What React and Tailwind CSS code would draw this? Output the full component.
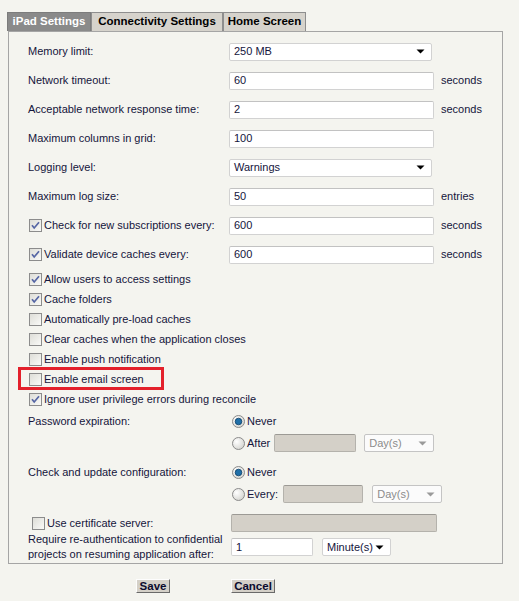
import React from 'react';

const ink = 'text-[#14143c]';

// small down triangle used by the drop-downs
const Caret = ({ muted }) => (
    <svg width="9" height="5" viewBox="0 0 9 5" className="shrink-0">
        <path d="M0.5 0.5 L8.5 0.5 L4.5 4.5 Z" fill={muted ? '#9a9a9a' : '#000'} />
    </svg>
);

const Select = ({ value, width, muted }) => (
    <div
        className={`flex h-[18px] items-center justify-between rounded-[2px] border pl-[4px] pr-[6px] ${
            muted ? 'border-[#c4c4c4] bg-[#fbfbfb] text-[#8c8c8c]' : `border-[#d2d2d2] bg-white ${ink}`
        }`}
        style={{ width }}
    >
        <span>{value}</span>
        <Caret muted={muted} />
    </div>
);

const Input = ({ value, width = 205, disabled }) => (
    <div
        className={`flex h-[18px] items-center rounded-[2px] border pl-[4px] ${
            disabled
                ? 'border-[#b4b2ac] border-t-[#9c9a95] bg-[#d4d0c8]'
                : `border-[#d2d2d2] border-t-[#c2c2c2] bg-white ${ink}`
        }`}
        style={{ width }}
    >
        {value}
    </div>
);

const Checkbox = ({ checked }) => (
    <svg width="13" height="13" viewBox="0 0 13 13" className="shrink-0">
        <defs>
            <linearGradient id="cbg" x1="0" y1="0" x2="1" y2="1">
                <stop offset="0" stopColor="#dcdcd6" />
                <stop offset="1" stopColor="#fbfbf9" />
            </linearGradient>
        </defs>
        <rect x="0.5" y="0.5" width="12" height="12" fill="url(#cbg)" stroke="#8c8c8c" />
        {checked && <path d="M3 6.2 L5.2 9 L10 3.2" fill="none" stroke="#5666a4" strokeWidth="1.7" />}
    </svg>
);

const Radio = ({ checked }) => (
    <svg width="13" height="13" viewBox="0 0 13 13" className="shrink-0">
        <defs>
            <radialGradient id="rbg" cx="0.35" cy="0.35" r="0.8">
                <stop offset="0" stopColor="#ffffff" />
                <stop offset="1" stopColor="#cfcfca" />
            </radialGradient>
        </defs>
        <circle cx="6.5" cy="6.5" r="6" fill="url(#rbg)" stroke="#8a8a8a" />
        {checked && <circle cx="6.5" cy="6.5" r="3.3" fill="#1f6fa8" stroke="#0d3f66" strokeWidth="0.8" />}
    </svg>
);

const Row = ({ label, children, unit }) => (
    <div className="flex h-[29px] items-center">
        <div className="w-[201px] shrink-0">{label}</div>
        {children}
        {unit && <span className="ml-[7px]">{unit}</span>}
    </div>
);

const CheckRow = ({ label, checked }) => (
    <div className="flex h-[20px] items-center gap-[2px] pl-[1px]">
        <Checkbox checked={checked} />
        <span>{label}</span>
    </div>
);

const Tab = ({ label, width, active }) => (
    <div
        className={`flex h-[19px] items-center justify-center border border-b-0 text-[11.5px] font-bold ${
            active ? 'border-[#7c7c7c] bg-[#8a8a8a] text-white' : 'border-[#8e8e8e] bg-[#d6d3cc] text-black'
        }`}
        style={{ width }}
    >
        {label}
    </div>
);

export default function App() {
    return (
        <div
            className={`h-[601px] w-[519px] bg-[#f4f4ef] pt-[12px] text-[11px] ${ink}`}
            style={{ fontFamily: '"Liberation Sans", Arial, sans-serif' }}
        >
            {/* tab strip */}
            <div className="ml-[7px] flex">
                <Tab label="iPad Settings" width={84} active />
                <Tab label="Connectivity Settings" width={132} />
                <Tab label="Home Screen" width={83} />
            </div>

            {/* settings panel */}
            <div className="ml-[8px] w-[495px] border border-[#a5a5a5] pb-[1px] pl-[19px] pt-[5px]">
                <Row label="Memory limit:">
                    <Select value="250 MB" width={203} />
                </Row>
                <Row label="Network timeout:" unit="seconds">
                    <Input value="60" />
                </Row>
                <Row label="Acceptable network response time:" unit="seconds">
                    <Input value="2" />
                </Row>
                <Row label="Maximum columns in grid:">
                    <Input value="100" />
                </Row>
                <Row label="Logging level:">
                    <Select value="Warnings" width={203} />
                </Row>
                <Row label="Maximum log size:" unit="entries">
                    <Input value="50" />
                </Row>
                <Row
                    label={
                        <span className="flex items-center gap-[2px] pl-[1px]">
                            <Checkbox checked />
                            Check for new subscriptions every:
                        </span>
                    }
                    unit="seconds"
                >
                    <Input value="600" />
                </Row>
                <Row
                    label={
                        <span className="flex items-center gap-[2px] pl-[1px]">
                            <Checkbox checked />
                            Validate device caches every:
                        </span>
                    }
                    unit="seconds"
                >
                    <Input value="600" />
                </Row>

                <div>
                    <CheckRow label="Allow users to access settings" checked />
                    <CheckRow label="Cache folders" checked />
                    <CheckRow label="Automatically pre-load caches" />
                    <CheckRow label="Clear caches when the application closes" />
                    <CheckRow label="Enable push notification" />
                    <div className="relative">
                        <CheckRow label="Enable email screen" />
                        <div className="pointer-events-none absolute left-[-10px] top-[-2px] h-[23px] w-[146px] border-[3px] border-[#e3202b]" />
                    </div>
                    <CheckRow label="Ignore user privilege errors during reconcile" checked />
                </div>

                {/* password expiration */}
                <div className="mt-[1px] flex h-[22px] items-center">
                    <div className="w-[204px] shrink-0">Password expiration:</div>
                    <Radio checked />
                    <span className="ml-[2px]">Never</span>
                </div>
                <div className="flex h-[22px] items-center pl-[204px]">
                    <Radio />
                    <span className="ml-[2px]">After</span>
                    <div className="ml-[4px]">
                        <Input width={82} disabled />
                    </div>
                    <div className="ml-[8px]">
                        <Select value="Day(s)" width={70} muted />
                    </div>
                </div>

                {/* configuration refresh */}
                <div className="mt-[7px] flex h-[22px] items-center">
                    <div className="w-[204px] shrink-0">Check and update configuration:</div>
                    <Radio checked />
                    <span className="ml-[2px]">Never</span>
                </div>
                <div className="flex h-[22px] items-center pl-[204px]">
                    <Radio />
                    <span className="ml-[2px]">Every:</span>
                    <div className="ml-[5px]">
                        <Input width={80} disabled />
                    </div>
                    <div className="ml-[9px]">
                        <Select value="Day(s)" width={70} muted />
                    </div>
                </div>

                {/* certificate + re-auth */}
                <div className="mt-[9px] flex h-[18px] items-center">
                    <div className="flex w-[203px] shrink-0 items-center gap-[2px] pl-[4px]">
                        <Checkbox />
                        <span>Use certificate server:</span>
                    </div>
                    <Input width={206} disabled />
                </div>
                <div className="flex h-[30px] items-center">
                    <div className="w-[203px] shrink-0 leading-[15px]">
                        Require re-authentication to confidential
                        <br />
                        projects on resuming application after:
                    </div>
                    <Input value="1" width={82} />
                    <div className="ml-[9px]">
                        <Select value="Minute(s)" width={69} />
                    </div>
                </div>
            </div>

            {/* actions */}
            <div className="mt-[15px] flex gap-[61px] pl-[136px]">
                <button className="h-[14px] w-[34px] border border-[#fdfdfd] border-b-[#6a6a6a] border-r-[#6a6a6a] bg-[#d4d0c8] text-[11.5px] font-bold leading-[12px] text-[#0b0b2e]">
                    Save
                </button>
                <button className="h-[14px] w-[44px] border border-[#fdfdfd] border-b-[#6a6a6a] border-r-[#6a6a6a] bg-[#d4d0c8] text-[11.5px] font-bold leading-[12px] text-[#0b0b2e]">
                    Cancel
                </button>
            </div>
        </div>
    );
}
